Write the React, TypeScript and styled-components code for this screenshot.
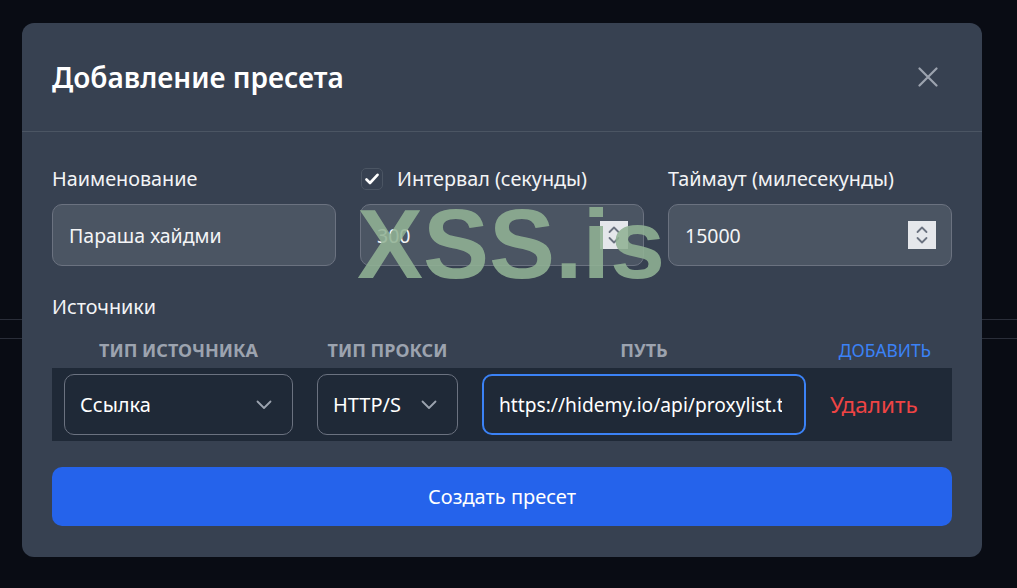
import React from "react";
import styled, { createGlobalStyle } from "styled-components";

const Global = createGlobalStyle`
  html, body { margin: 0; padding: 0; background: #090c14; }
  body { font-family: "Noto Sans", "Open Sans", sans-serif; color: #f3f4f6; }
  * { box-sizing: border-box; }
`;

const Page = styled.div`
  position: relative;
  width: 1017px;
  height: 588px;
  overflow: hidden;
  background: #090c14;
  padding-top: 319px;
`;

const BackdropRow = styled.div`
  height: 20px;
  border-top: 1px solid #2a2e39;
  border-bottom: 1px solid #2a2e39;
`;

const Overlay = styled.div`
  position: absolute;
  inset: 0;
  display: flex;
  align-items: flex-start;
  padding: 23px 0 0 22px;
`;

const Modal = styled.div`
  width: 960px;
  height: 534px;
  background: #374151;
  border-radius: 12px;
  display: flex;
  flex-direction: column;
`;

const Header = styled.div`
  height: 109px;
  padding: 0 30px;
  display: flex;
  align-items: center;
  justify-content: space-between;
  border-bottom: 1px solid #4b5563;
`;

const Title = styled.h2`
  margin: 0;
  font-size: 28px;
  font-weight: 600;
  color: #ffffff;
`;

const CloseButton = styled.button`
  background: none;
  border: none;
  padding: 0;
  margin-right: 14px;
  width: 20px;
  height: 20px;
  display: flex;
  color: #9ca3af;
  cursor: pointer;
`;

const Body = styled.div`
  padding: 33px 30px 31px;
  display: flex;
  flex-direction: column;
`;

const FieldsGrid = styled.div`
  display: grid;
  grid-template-columns: repeat(3, 284px);
  gap: 24px;
`;

const Field = styled.div`
  display: flex;
  flex-direction: column;
  gap: 12px;
`;

const LabelRow = styled.label`
  height: 27px;
  display: flex;
  align-items: center;
  gap: 14px;
  font-size: 19.8px;
  color: #f3f4f6;
`;

const CheckBox = styled.span`
  width: 22px;
  height: 22px;
  margin-left: 1px;
  border: 1px solid #4b5563;
  border-radius: 5px;
  background: #374151;
  display: flex;
  align-items: center;
  justify-content: center;
`;

const InputBox = styled.div`
  height: 62px;
  border: 1px solid #6b7280;
  border-radius: 10px;
  background: #4b5563;
  display: flex;
  align-items: center;
  padding: 0 15px 0 16px;
`;

const TextInput = styled.input`
  flex: 1;
  min-width: 0;
  background: transparent;
  border: none;
  outline: none;
  font-family: inherit;
  font-size: 19.5px;
  color: #f3f4f6;
  padding: 0;
`;

const Spin = styled.span`
  width: 28px;
  height: 28px;
  background: #e5e7eb;
  display: flex;
  align-items: center;
  justify-content: center;
`;

const SectionLabel = styled.div`
  margin-top: 27px;
  font-size: 19.8px;
  line-height: 27px;
  color: #f3f4f6;
`;

const Table = styled.div`
  margin-top: 12px;
  display: grid;
  grid-template-columns: 253px 165px 348px 134px;
`;

const HeadCell = styled.div<{ $link?: boolean }>`
  height: 36px;
  display: flex;
  align-items: center;
  justify-content: center;
  font-size: ${(p) => (p.$link ? "17.4px" : "18px")};
  font-weight: ${(p) => (p.$link ? 400 : 700)};
  text-transform: uppercase;
  color: ${(p) => (p.$link ? "#3b82f6" : "#9ca3af")};
  cursor: ${(p) => (p.$link ? "pointer" : "default")};
`;

const Cell = styled.div`
  background: #1f2937;
  padding: 6px 12px;
  display: flex;
  align-items: center;
`;

const SelectBox = styled.div`
  flex: 1;
  height: 61px;
  border: 1px solid #6b7280;
  border-radius: 10px;
  background: #1f2937;
  display: flex;
  align-items: center;
  justify-content: space-between;
  padding: 0 20px 0 15px;
  font-size: 20px;
  color: #ffffff;
`;

const PathInput = styled.input`
  flex: 1;
  min-width: 0;
  height: 61px;
  border: 2px solid #3b82f6;
  border-radius: 10px;
  background: #1f2937;
  outline: none;
  padding: 0 22px 0 15px;
  font-family: inherit;
  font-size: 19.2px;
  color: #ffffff;
`;

const DeleteLink = styled.span`
  font-size: 22.5px;
  color: #ef4444;
  cursor: pointer;
`;

const SubmitButton = styled.button`
  margin-top: 26px;
  height: 59px;
  border: none;
  border-radius: 10px;
  background: #2563eb;
  color: #ffffff;
  font-family: inherit;
  font-size: 20px;
  cursor: pointer;
`;

const Watermark = styled.div`
  position: absolute;
  left: 357px;
  top: 194px;
  font-family: "Liberation Sans", Arial, sans-serif;
  font-weight: 700;
  font-size: 99px;
  line-height: 1;
  color: rgba(145, 178, 148, 0.88);
  pointer-events: none;
`;

const Chevron = () => (
  <svg width="16" height="10" viewBox="0 0 16 10" fill="none">
    <path d="M1.5 1.5 L8 8 L14.5 1.5" stroke="#9ca3af" strokeWidth="1.8" strokeLinecap="round" strokeLinejoin="round" />
  </svg>
);

const SpinIcon = () => (
  <svg width="14" height="22" viewBox="0 0 14 22" fill="none">
    <path d="M2.5 8 L7 3.5 L11.5 8" stroke="#6b7280" strokeWidth="1.8" strokeLinecap="round" strokeLinejoin="round" />
    <path d="M2.5 14 L7 18.5 L11.5 14" stroke="#6b7280" strokeWidth="1.8" strokeLinecap="round" strokeLinejoin="round" />
  </svg>
);

export default function App() {
  return (
    <>
      <Global />
      <Page>
        <BackdropRow />
        <Overlay>
          <Modal>
            <Header>
              <Title>Добавление пресета</Title>
              <CloseButton aria-label="Закрыть">
                <svg width="20" height="20" viewBox="0 0 20 20" fill="none">
                  <path d="M1.5 1.5 L18.5 18.5 M18.5 1.5 L1.5 18.5" stroke="currentColor" strokeWidth="2.2" strokeLinecap="round" />
                </svg>
              </CloseButton>
            </Header>
            <Body>
              <FieldsGrid>
                <Field>
                  <LabelRow>Наименование</LabelRow>
                  <InputBox>
                    <TextInput defaultValue="Параша хайдми" />
                  </InputBox>
                </Field>
                <Field>
                  <LabelRow>
                    <CheckBox>
                      <svg width="14" height="12" viewBox="0 0 14 12" fill="none">
                        <path d="M1.5 6.5 L5 10 L12.5 1.8" stroke="#ffffff" strokeWidth="2.6" strokeLinecap="round" strokeLinejoin="round" />
                      </svg>
                    </CheckBox>
                    Интервал (секунды)
                  </LabelRow>
                  <InputBox>
                    <TextInput defaultValue="300" />
                    <Spin>
                      <SpinIcon />
                    </Spin>
                  </InputBox>
                </Field>
                <Field>
                  <LabelRow>Таймаут (милесекунды)</LabelRow>
                  <InputBox>
                    <TextInput defaultValue="15000" />
                    <Spin>
                      <SpinIcon />
                    </Spin>
                  </InputBox>
                </Field>
              </FieldsGrid>
              <SectionLabel>Источники</SectionLabel>
              <Table>
                <HeadCell>Тип источника</HeadCell>
                <HeadCell>Тип прокси</HeadCell>
                <HeadCell>Путь</HeadCell>
                <HeadCell $link>Добавить</HeadCell>
                <Cell>
                  <SelectBox>
                    Ссылка
                    <Chevron />
                  </SelectBox>
                </Cell>
                <Cell>
                  <SelectBox>
                    HTTP/S
                    <Chevron />
                  </SelectBox>
                </Cell>
                <Cell>
                  <PathInput defaultValue="https://hidemy.io/api/proxylist.txt?out=plain" />
                </Cell>
                <Cell>
                  <DeleteLink>Удалить</DeleteLink>
                </Cell>
              </Table>
              <SubmitButton>Создать пресет</SubmitButton>
            </Body>
          </Modal>
        </Overlay>
        <Watermark>XSS.is</Watermark>
      </Page>
    </>
  );
}
